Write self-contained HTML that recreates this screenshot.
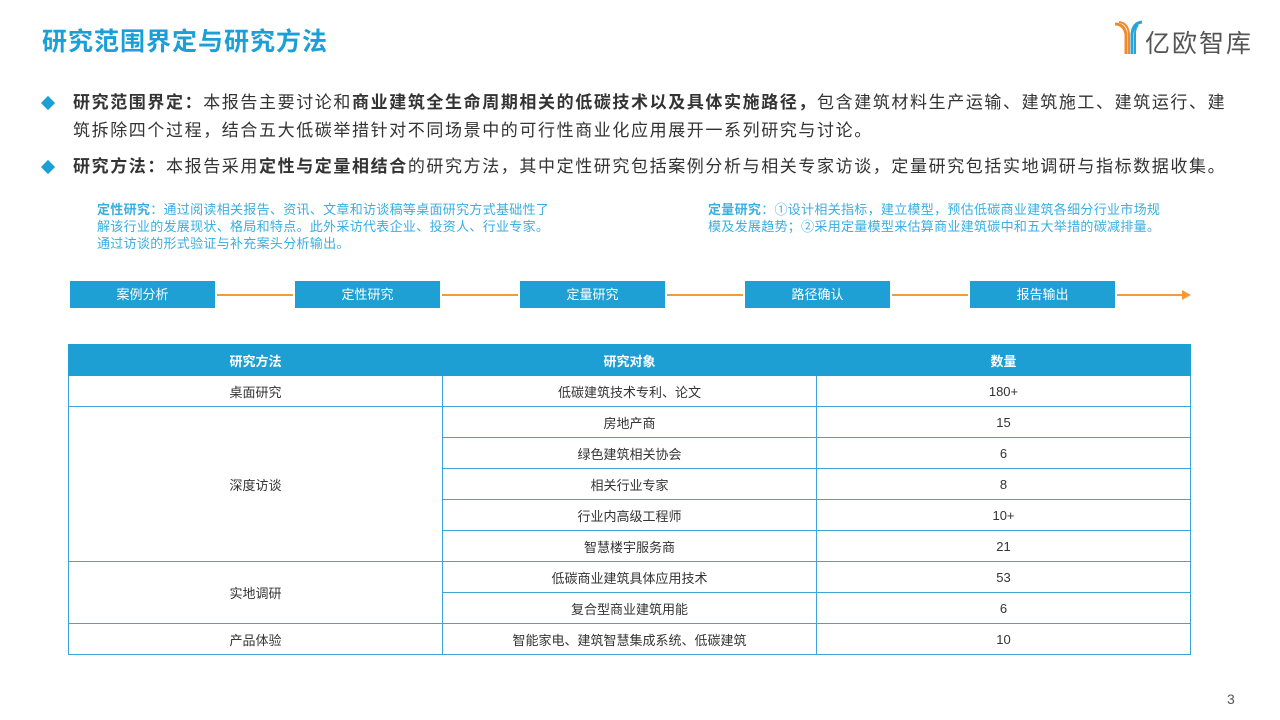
<html><head><meta charset="utf-8"><style>
*{margin:0;padding:0;box-sizing:border-box}
body{width:1280px;height:720px;background:#fff;position:relative;overflow:hidden;font-family:"Liberation Sans","Noto Sans CJK SC",sans-serif;color:#333}
.a{position:absolute}
.t{left:42px;top:22px;font-size:25px;font-weight:bold;color:#1a9fd6;letter-spacing:1px}
.b{left:46px;font-size:17px;line-height:28px;width:1230px;letter-spacing:1.6px;white-space:nowrap}
.b .d{position:absolute;left:-3px;top:9px;width:10px;height:10px;background:#1a9fd6;transform:rotate(45deg)}
.b p{margin-left:27px}
.n{font-size:13px;color:#3aaee0;line-height:17px;letter-spacing:0.3px}
.box{top:281px;height:27px;width:145px;background:#1ea0d4;color:#fff;font-size:13px;text-align:center;line-height:27px}
.ln{top:294px;height:2px;background:#f39a3a}
table{position:absolute;left:68px;top:344px;width:1123px;border-collapse:collapse;font-size:13px;text-align:center;color:#333}
td,th{height:31px;border:1px solid #3ba5da;padding:0}
th{background:#1e9fd4;color:#fff;font-weight:bold;border-color:#1e9fd4}
</style></head><body>
<div class="a t">研究范围界定与研究方法</div>
<div class="a" style="left:1114px;top:20px;width:30px;height:36px">
<svg width="30" height="36" viewBox="0 0 30 36"><path d="M1 4 Q10 4 12 14 L12 34" stroke="#f08a2c" stroke-width="3" fill="none"/><path d="M5 2 Q14 3 15 14 L15 34" stroke="#f08a2c" stroke-width="2" fill="none"/><path d="M28 2 Q19 3 18 14 L18 34" stroke="#2aa3d8" stroke-width="3" fill="none"/><path d="M24 5 Q21 8 21 14 L21 34" stroke="#2aa3d8" stroke-width="2" fill="none"/></svg></div>
<div class="a" style="left:1145px;top:24px;font-size:25px;color:#555;letter-spacing:2px">亿欧智库</div>
<div class="a b" style="top:89px"><span class="d"></span><p><b>研究范围界定：</b>本报告主要讨论和<b>商业建筑全生命周期相关的低碳技术以及具体实施路径，</b>包含建筑材料生产运输、建筑施工、建筑运行、建<br>筑拆除四个过程，结合五大低碳举措针对不同场景中的可行性商业化应用展开一系列研究与讨论。</p></div>
<div class="a b" style="top:153px"><span class="d"></span><p><b>研究方法：</b>本报告采用<b>定性与定量相结合</b>的研究方法，其中定性研究包括案例分析与相关专家访谈，定量研究包括实地调研与指标数据收集。</p></div>
<div class="a n" style="left:97px;top:201px;width:462px"><b>定性研究</b>：通过阅读相关报告、资讯、文章和访谈稿等桌面研究方式基础性了解该行业的发展现状、格局和特点。此外采访代表企业、投资人、行业专家。通过访谈的形式验证与补充案头分析输出。</div>
<div class="a n" style="left:708px;top:201px;width:465px"><b>定量研究</b>：①设计相关指标，建立模型，预估低碳商业建筑各细分行业市场规模及发展趋势；②采用定量模型来估算商业建筑碳中和五大举措的碳减排量。</div>
<div class="a box" style="left:70px">案例分析</div>
<div class="a ln" style="left:217px;width:76px"></div>
<div class="a box" style="left:295px">定性研究</div>
<div class="a ln" style="left:442px;width:76px"></div>
<div class="a box" style="left:520px">定量研究</div>
<div class="a ln" style="left:667px;width:76px"></div>
<div class="a box" style="left:745px">路径确认</div>
<div class="a ln" style="left:892px;width:76px"></div>
<div class="a box" style="left:970px">报告输出</div>
<div class="a ln" style="left:1117px;width:66px"></div>
<div class="a" style="left:1182px;top:290px;border-left:9px solid #f39a3a;border-top:5px solid transparent;border-bottom:5px solid transparent"></div>
<table>
<tr><th style="width:374px">研究方法</th><th style="width:374px">研究对象</th><th>数量</th></tr>
<tr><td>桌面研究</td><td>低碳建筑技术专利、论文</td><td>180+</td></tr>
<tr><td rowspan="5">深度访谈</td><td>房地产商</td><td>15</td></tr>
<tr><td>绿色建筑相关协会</td><td>6</td></tr>
<tr><td>相关行业专家</td><td>8</td></tr>
<tr><td>行业内高级工程师</td><td>10+</td></tr>
<tr><td>智慧楼宇服务商</td><td>21</td></tr>
<tr><td rowspan="2">实地调研</td><td>低碳商业建筑具体应用技术</td><td>53</td></tr>
<tr><td>复合型商业建筑用能</td><td>6</td></tr>
<tr><td>产品体验</td><td>智能家电、建筑智慧集成系统、低碳建筑</td><td>10</td></tr>
</table>
<div class="a" style="left:1227px;top:691px;font-size:14px;color:#555">3</div>
</body></html>
